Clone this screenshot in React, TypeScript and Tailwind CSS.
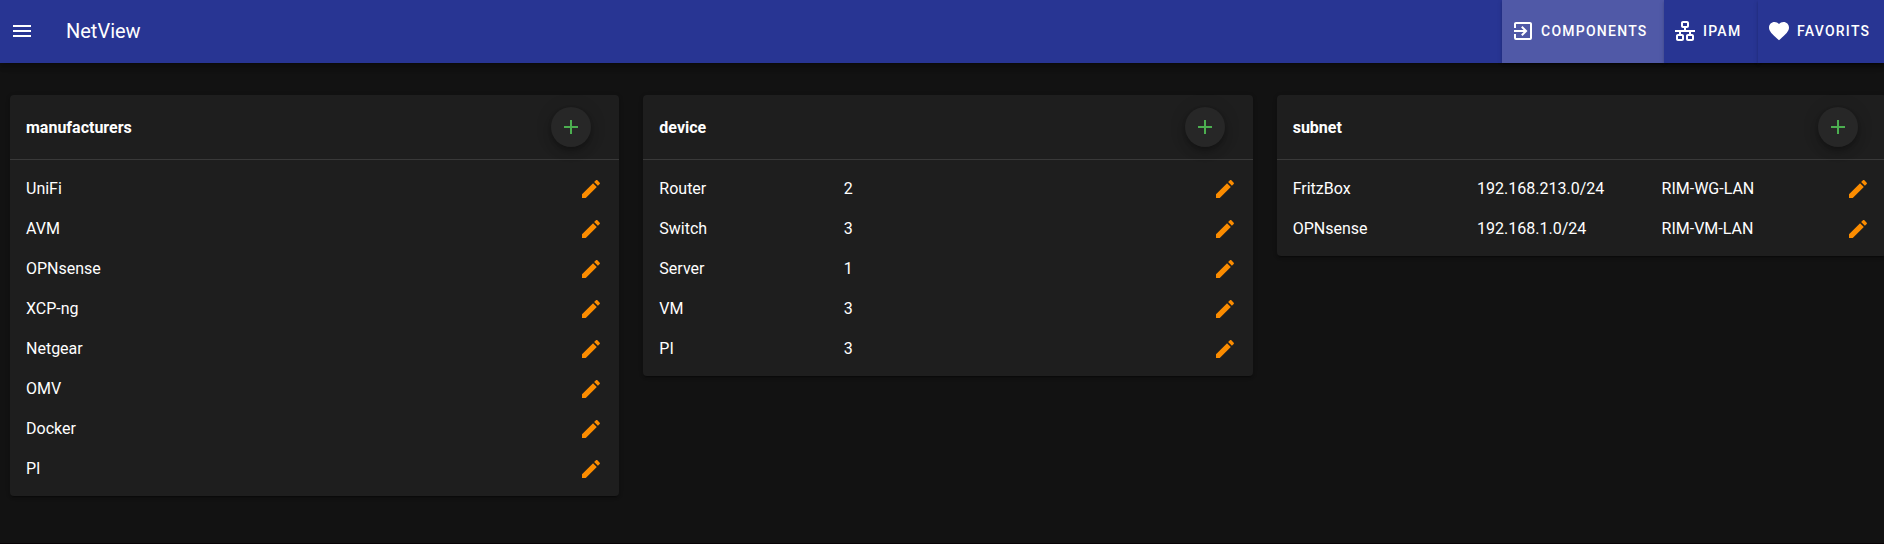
import type { ReactNode } from 'react';

const icons = {
  menu: 'M3,6H21V8H3V6M3,11H21V13H3V11M3,16H21V18H3V16Z',
  exitToApp:
    'M19,3H5C3.89,3 3,3.89 3,5V9H5V5H19V19H5V15H3V19A2,2 0 0,0 5,21H19A2,2 0 0,0 21,19V5C21,3.89 20.1,3 19,3M10.08,15.58L11.5,17L16.5,12L11.5,7L10.08,8.41L12.67,11H3V13H12.67L10.08,15.58Z',
  lan: 'M10,2C8.89,2 8,2.89 8,4V7C8,8.11 8.89,9 10,9H11V11H2V13H6V15H5C3.89,15 3,15.89 3,17V20C3,21.11 3.89,22 5,22H9C10.11,22 11,21.11 11,20V17C11,15.89 10.11,15 9,15H8V13H16V15H15C13.89,15 13,15.89 13,17V20C13,21.11 13.89,22 15,22H19C20.11,22 21,21.11 21,20V17C21,15.89 20.11,15 19,15H18V13H22V11H13V9H14C15.11,9 16,8.11 16,7V4C16,2.89 15.11,2 14,2H10M10,4H14V7H10V4M5,17H9V20H5V17M15,17H19V20H15V17Z',
  heart:
    'M12,21.35L10.55,20.03C5.4,15.36 2,12.27 2,8.5C2,5.41 4.42,3 7.5,3C9.24,3 10.91,3.81 12,5.08C13.09,3.81 14.76,3 16.5,3C19.58,3 22,5.41 22,8.5C22,12.27 18.6,15.36 13.45,20.03L12,21.35Z',
  plus: 'M19,13H13V19H11V13H5V11H11V5H13V11H19V13Z',
  pencil:
    'M20.71,7.04C21.1,6.65 21.1,6 20.71,5.63L18.37,3.29C18,2.9 17.35,2.9 16.96,3.29L15.12,5.12L18.87,8.87M3,17.25V21H6.75L17.81,9.93L14.06,6.18L3,17.25Z',
};

function Icon({ name, className = '' }: { name: keyof typeof icons; className?: string }) {
  return (
    <svg viewBox="0 0 24 24" fill="currentColor" className={`size-6 shrink-0 ${className}`} aria-hidden="true">
      <path d={icons[name]} />
    </svg>
  );
}

function NavButton({ icon, className, children }: { icon: keyof typeof icons; className: string; children: ReactNode }) {
  return (
    <button
      className={`flex h-full items-center gap-1.5 pb-px pl-[9px] text-sm font-medium tracking-[1.25px] uppercase shadow-[0_3px_1px_-2px_rgba(0,0,0,0.2),0_2px_2px_0_rgba(0,0,0,0.14),0_1px_5px_0_rgba(0,0,0,0.12)] ${className}`}
    >
      <Icon name={icon} />
      {children}
    </button>
  );
}

function Card({ title, rows }: { title: string; rows: string[][] }) {
  return (
    <section className="rounded bg-[#1e1e1e] shadow-[0_3px_1px_-2px_rgba(0,0,0,0.2),0_2px_2px_0_rgba(0,0,0,0.14),0_1px_5px_0_rgba(0,0,0,0.12)]">
      <header className="flex h-[65px] items-center justify-between border-b border-[#393939] pr-7 pl-4">
        <h2 className="pt-0.5 text-base font-bold">{title}</h2>
        <button
          aria-label="Add"
          className="flex size-10 items-center justify-center rounded-full bg-[#272727] text-[#4caf50] shadow-[0_3px_5px_-1px_rgba(0,0,0,0.2),0_6px_10px_0_rgba(0,0,0,0.14),0_1px_18px_0_rgba(0,0,0,0.12)]"
        >
          <Icon name="plus" />
        </button>
      </header>
      <ul className="px-4 py-2">
        {rows.map((row) => (
          <li key={row[0]} className="grid h-10 grid-cols-[1fr_1fr_1fr_24px] items-center pt-0.5">
            <span>{row[0]}</span>
            <span>{row[1]}</span>
            <span>{row[2]}</span>
            <button aria-label="Edit" className="text-[#fb8c00]">
              <Icon name="pencil" />
            </button>
          </li>
        ))}
      </ul>
    </section>
  );
}

const manufacturers = [['UniFi'], ['AVM'], ['OPNsense'], ['XCP-ng'], ['Netgear'], ['OMV'], ['Docker'], ['PI']];
const devices = [['Router', '2'], ['Switch', '3'], ['Server', '1'], ['VM', '3'], ['PI', '3']];
const subnets = [
  ['FritzBox', '192.168.213.0/24', 'RIM-WG-LAN'],
  ['OPNsense', '192.168.1.0/24', 'RIM-VM-LAN'],
];

export default function App() {
  return (
    <div className="h-[544px] overflow-hidden border-b border-[#080305] bg-[#121212] font-[Roboto,sans-serif] text-base text-white">
      <header className="flex h-[63px] items-center bg-[#283593] pl-[10px] shadow-[0_2px_4px_-1px_rgba(0,0,0,0.2),0_4px_5px_0_rgba(0,0,0,0.14),0_1px_10px_0_rgba(0,0,0,0.12)]">
        <button aria-label="Menu" className="pb-px">
          <Icon name="menu" />
        </button>
        <h1 className="ml-8 pb-px text-xl">NetView</h1>
        <nav className="ml-auto flex h-full">
          <NavButton icon="exitToApp" className="w-[162px] bg-[#5059a7]">
            Components
          </NavButton>
          <NavButton icon="lan" className="w-[94px] bg-[#283593]">
            IPAM
          </NavButton>
          <NavButton icon="heart" className="w-[126px] bg-[#283593]">
            Favorits
          </NavButton>
        </nav>
      </header>
      <main className="mt-8 ml-[10px] grid w-[1876px] grid-cols-3 items-start gap-6">
        <Card title="manufacturers" rows={manufacturers} />
        <Card title="device" rows={devices} />
        <Card title="subnet" rows={subnets} />
      </main>
    </div>
  );
}
